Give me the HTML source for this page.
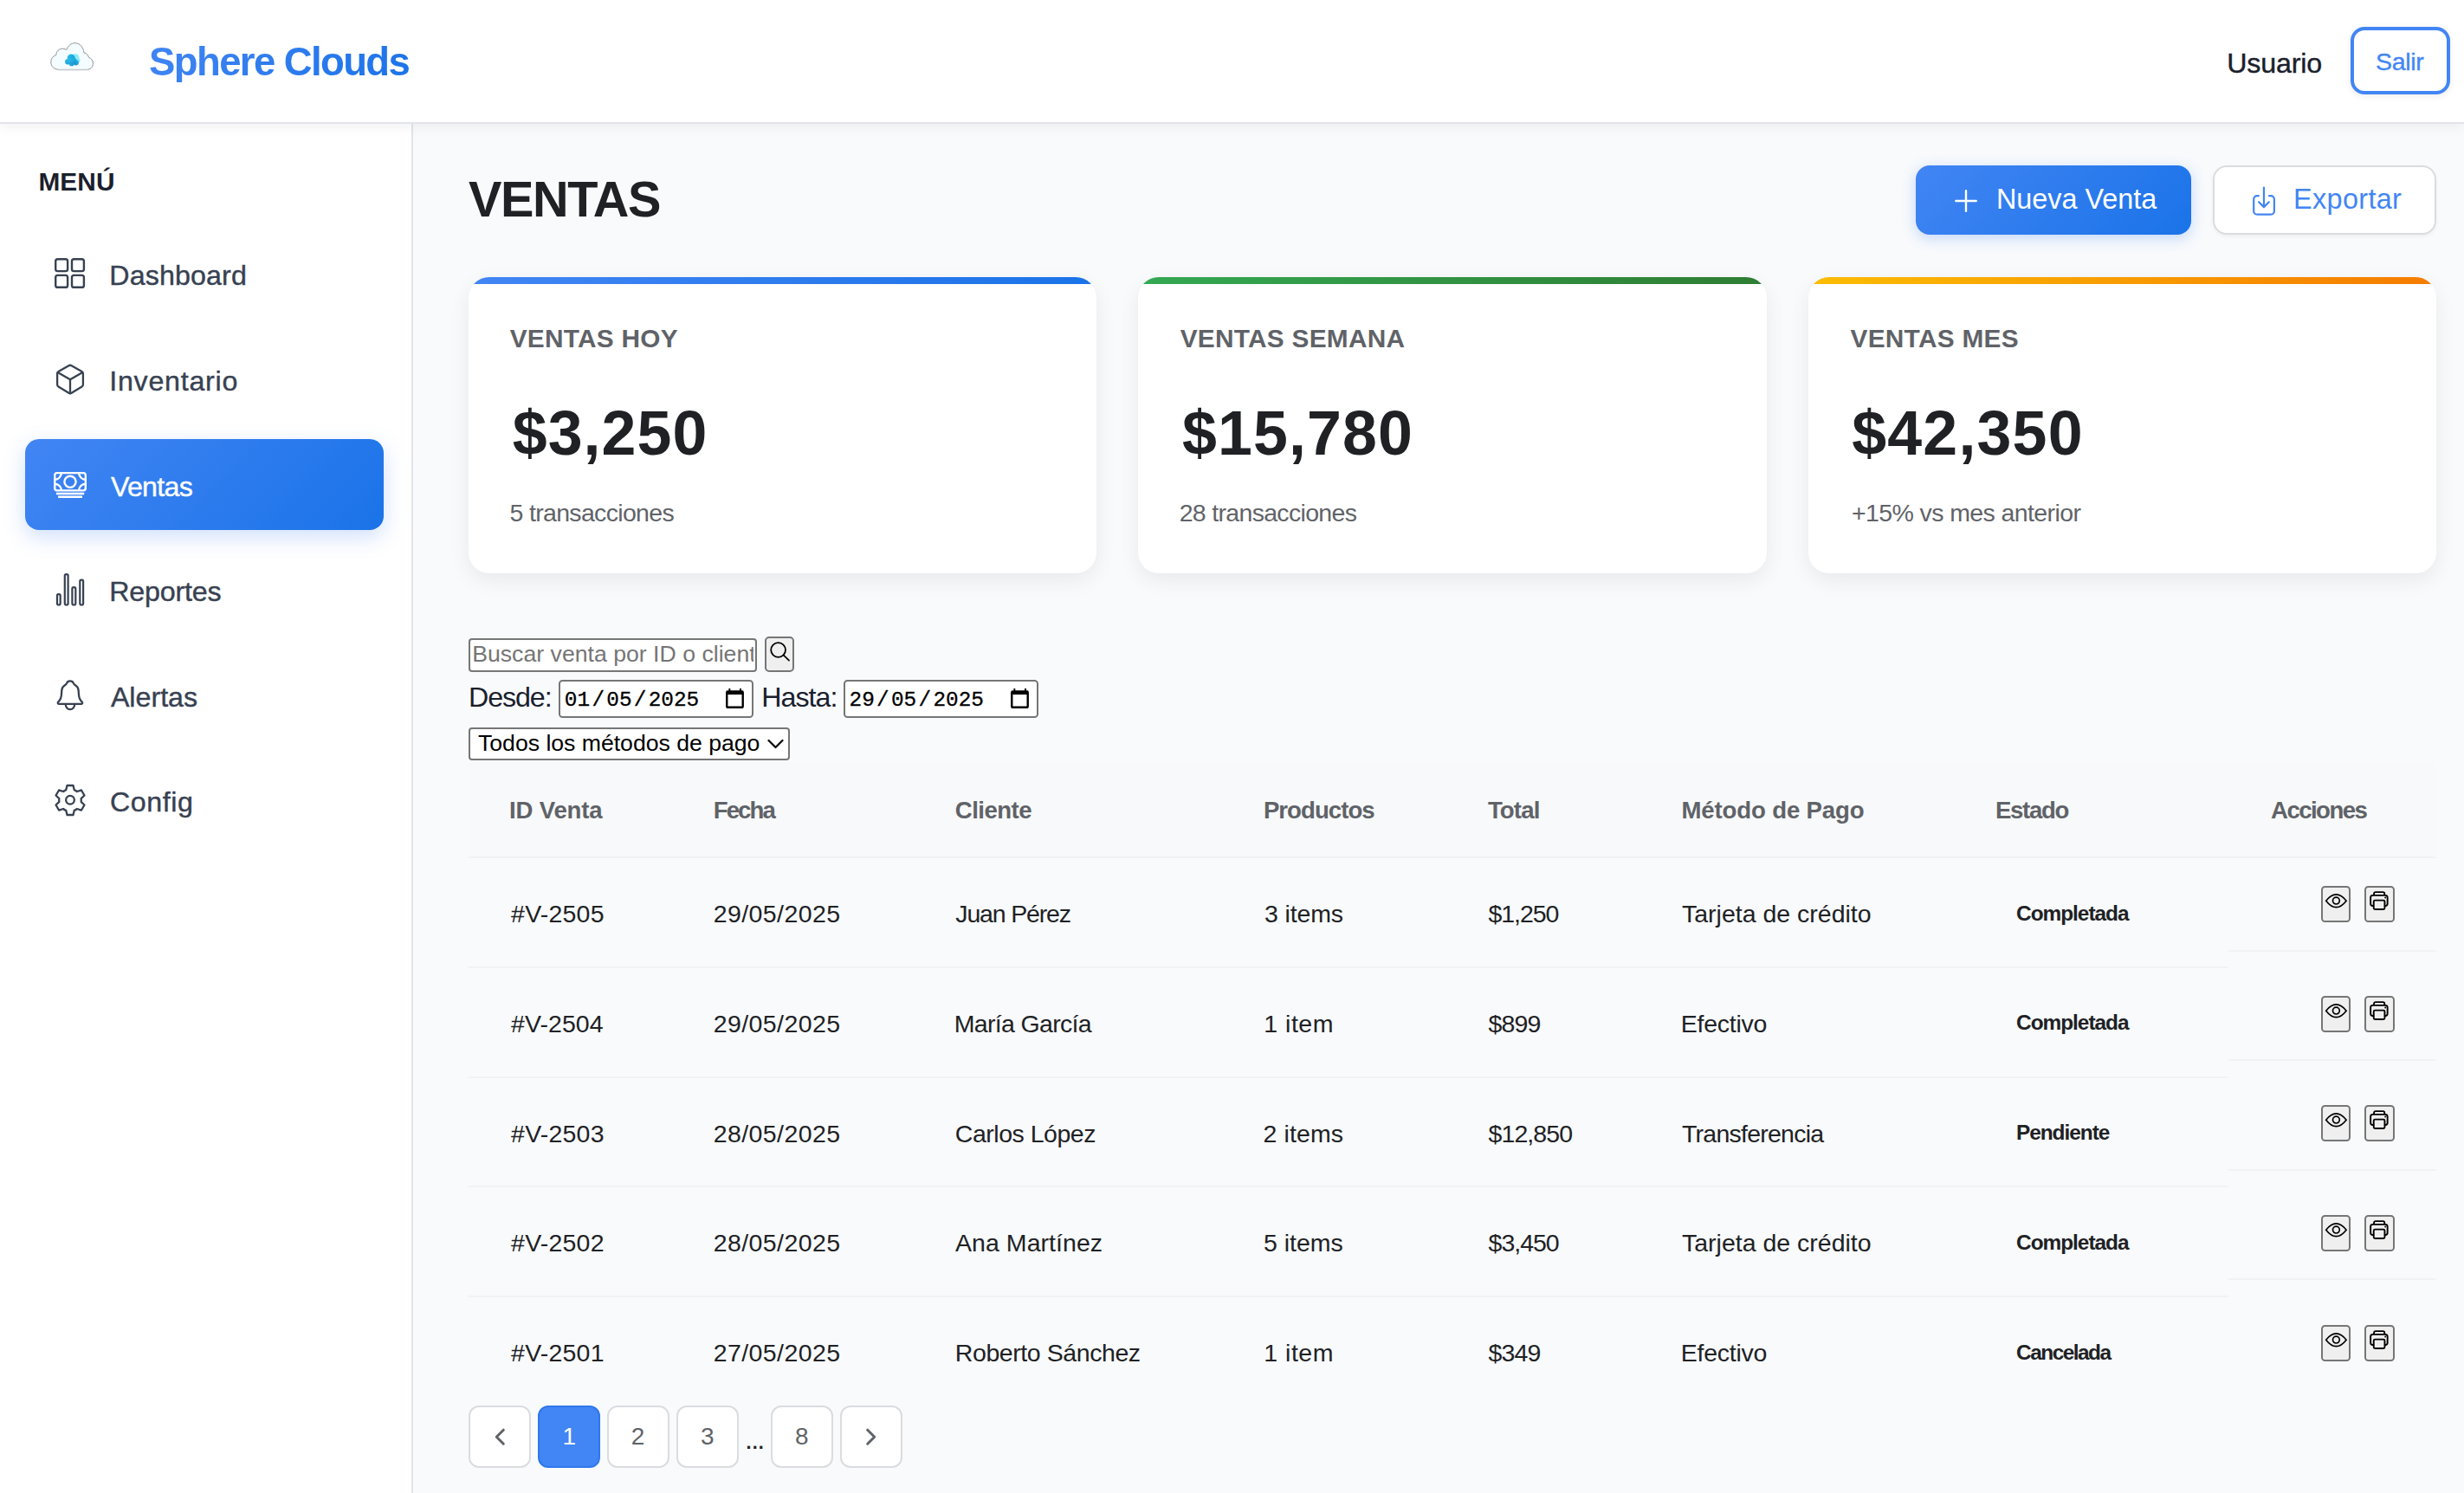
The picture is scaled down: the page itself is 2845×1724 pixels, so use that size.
<!DOCTYPE html>
<html lang="es"><head><meta charset="utf-8"><title>Sphere Clouds - Ventas</title>
<style>
html,body{margin:0;padding:0;}
body{width:2845px;height:1724px;overflow:hidden;background:#f8fafc;font-family:"Liberation Sans",sans-serif;position:relative;}
.t{position:absolute;white-space:nowrap;line-height:1;}
.grad{background:linear-gradient(135deg,#4285f4,#1a73e8);-webkit-background-clip:text;background-clip:text;color:transparent !important;}
</style></head><body>

<div style="position:absolute;left:0px;top:141px;width:475px;height:1583px;background:#fff;border-right:2px solid #e2e4e9;"></div>
<div style="position:absolute;left:0px;top:0px;width:2845px;height:141px;background:#fff;border-bottom:2px solid #e2e4e9;box-shadow:0 4px 14px rgba(0,0,0,.055);"></div>
<svg style="position:absolute;left:57.45px;top:47.55px;" width="52.2" height="34.8" viewBox="0 0 54 36" fill="none" >
<defs><linearGradient id="cg" x1="0" y1="0" x2="1" y2="1"><stop offset="0" stop-color="#2bc4ea"/><stop offset="1" stop-color="#1a8fd1"/></linearGradient></defs>
<path d="M12 33.5 C5 33.5 1.8 29 1.8 24.5 C1.8 20 4.5 17.2 8 16.2 C8.2 11.5 11.5 8.5 16 8.5 C17.8 8.5 19.3 9 20.6 9.8 C22.3 5 26 1.8 30.5 1.8 C36.5 1.8 40.5 6.5 41.3 13.3 C44.5 14 46.3 16 47 18.8 C50.2 20 52.2 22.8 52.2 26 C52.2 30.5 49 33.5 44.5 33.5 Z" fill="#f5fcff" stroke="#8a8f94" stroke-width="1"/>
<path d="M10 34 H46" stroke="#d5d9dc" stroke-width="1.4"/>
<circle cx="31" cy="19" r="4.2" fill="#86ecfb"/><circle cx="33.5" cy="22.5" r="3.2" fill="#86ecfb"/>
<circle cx="26" cy="19.5" r="4.6" fill="url(#cg)"/><circle cx="22" cy="24" r="3.3" fill="url(#cg)"/><circle cx="26.5" cy="26" r="3.2" fill="url(#cg)"/><circle cx="31.5" cy="25" r="3.4" fill="url(#cg)"/><rect x="22" y="20" width="10" height="7" fill="url(#cg)"/>
</svg>
<div id="title" class="t grad" style="left:172.00px;top:49.48px;font-size:45.5px;font-weight:700;color:#2b7de9;letter-spacing:-1.601px;">Sphere Clouds</div>
<div id="usuario" class="t" style="left:2571.20px;top:56.54px;font-size:32.2px;color:#1a202c;letter-spacing:-0.150px;-webkit-text-stroke:0.4px;">Usuario</div>
<div style="position:absolute;left:2714px;top:31px;width:115px;height:78px;box-sizing:border-box;border:4px solid #4285f4;border-radius:16px;background:#fff;box-shadow:0 2px 8px rgba(0,0,0,.08);"></div>
<div id="salir" class="t" style="left:2743.10px;top:57.27px;font-size:28.5px;color:#4285f4;letter-spacing:-0.360px;-webkit-text-stroke:0.35px;">Salir</div>
<div id="menu" class="t" style="left:44.40px;top:195.17px;font-size:29.8px;font-weight:700;color:#1a202c;letter-spacing:0.120px;">MENÚ</div>
<svg style="position:absolute;left:63.45px;top:298.4px;" width="36" height="36" viewBox="0 0 36 36" fill="none" ><g stroke="#374151" stroke-width="2.4" fill="none"><rect x="1.2" y="1.2" width="13.9" height="13.9" rx="2.4"/><rect x="20" y="1.2" width="13.9" height="13.9" rx="2.4"/><rect x="1.2" y="19.9" width="13.9" height="13.9" rx="2.4"/><rect x="20" y="19.9" width="13.9" height="13.9" rx="2.4"/></g></svg>
<div id="nav0" class="t" style="left:126.30px;top:302.34px;font-size:32.2px;color:#374151;letter-spacing:0.134px;-webkit-text-stroke:0.4px;">Dashboard</div>
<svg style="position:absolute;left:62.900000000000006px;top:418.9px;" width="36" height="38" viewBox="-18 -19 36 38" fill="none" ><g stroke="#374151" stroke-width="2.3" fill="none" stroke-linejoin="round" stroke-linecap="round"><path d="M-1.6 -15.8 Q0 -16.7 1.6 -15.8 L13.5 -9 Q14.9 -8.2 14.9 -6.5 V6.1 Q14.9 7.8 13.5 8.6 L1.6 15.8 Q0 16.7 -1.6 15.8 L-13.5 8.6 Q-14.9 7.8 -14.9 6.1 V-6.5 Q-14.9 -8.2 -13.5 -9 Z"/><path d="M-14.3 -7.9 L0 0.2 L14.3 -7.9 M0 0.2 V16.2"/></g></svg>
<div id="nav1" class="t" style="left:126.30px;top:423.94px;font-size:32.2px;color:#374151;letter-spacing:0.740px;-webkit-text-stroke:0.4px;">Inventario</div>
<div style="position:absolute;left:29px;top:506.9px;width:414px;height:105px;border-radius:16px;background:linear-gradient(135deg,#4285f4,#1a73e8);box-shadow:0 8px 24px rgba(66,133,244,.25);"></div>
<svg style="position:absolute;left:61.0px;top:543px;" width="40" height="34" viewBox="0 0 40 34" fill="none" ><g stroke="#fff" stroke-width="2.4" fill="none"><rect x="2.25" y="3.1" width="35.55" height="20.3" rx="2.6"/><circle cx="20" cy="13.3" r="6.6"/><path d="M9.9 3.1 A7.6 7.6 0 0 1 2.25 10.7 M30.1 3.1 A7.6 7.6 0 0 0 37.8 10.7 M2.25 15.8 A7.6 7.6 0 0 1 9.9 23.4 M37.8 15.8 A7.6 7.6 0 0 0 30.1 23.4"/><path d="M3.9 27 H36.2 M6.1 30.8 H34"/></g></svg>
<div id="nav2" class="t" style="left:127.90px;top:545.54px;font-size:32.2px;color:#fff;letter-spacing:-0.684px;-webkit-text-stroke:0.4px;">Ventas</div>
<svg style="position:absolute;left:63.0px;top:660px;" width="36" height="42" viewBox="0 0 36 42" fill="none" ><g stroke="#374151" stroke-width="2.2" fill="none"><rect x="2.97" y="26.05" width="3.7" height="12.45" rx="1.7"/><rect x="11.8" y="3.15" width="3.8" height="35.35" rx="1.7"/><rect x="20.4" y="18.2" width="3.9" height="20.3" rx="1.7"/><rect x="29.3" y="9.6" width="3.8" height="28.9" rx="1.7"/></g></svg>
<div id="nav3" class="t" style="left:126.30px;top:667.14px;font-size:32.2px;color:#374151;letter-spacing:-0.176px;-webkit-text-stroke:0.4px;">Reportes</div>
<svg style="position:absolute;left:63.0px;top:783px;" width="36" height="40" viewBox="0 0 36 40" fill="none" ><g stroke="#374151" stroke-width="2.3" fill="none" stroke-linejoin="round" stroke-linecap="round"><path d="M17.94 3.45 C15.9 3.45 14.6 4.5 14.1 5.9 C13.5 7.3 12.6 7.9 11.6 8.5 C9.6 9.7 8.6 11.6 8.3 14 L7.8 20.5 C7.6 23 6.6 24.6 5.4 26.2 L4.2 27.6 C3.2 28.8 3.9 29.97 5.3 29.97 H30.6 C32 29.97 32.7 28.8 31.7 27.6 L30.5 26.2 C29.3 24.6 28.3 23 28.1 20.5 L27.6 14 C27.3 11.6 26.3 9.7 24.3 8.5 C23.3 7.9 22.4 7.3 21.8 5.9 C21.3 4.5 20 3.45 17.94 3.45 Z"/><path d="M12.7 30.2 C12.9 33.6 15 36.1 17.94 36.1 C20.9 36.1 23 33.6 23.2 30.2"/></g></svg>
<div id="nav4" class="t" style="left:127.90px;top:788.74px;font-size:32.2px;color:#374151;-webkit-text-stroke:0.4px;">Alertas</div>
<svg style="position:absolute;left:61.900000000000006px;top:904.8px;" width="38" height="38" viewBox="-19 -19 38 38" fill="none" ><g stroke="#374151" stroke-width="2.3" fill="none" stroke-linejoin="round"><path d="M-4.70 -11.90 L-3.50 -17.00 L3.50 -17.00 L4.70 -11.90 A12.8 12.8 0 0 1 7.96 -10.02 L12.97 -11.53 L16.47 -5.47 L12.66 -1.88 A12.8 12.8 0 0 1 12.66 1.88 L16.47 5.47 L12.97 11.53 L7.96 10.02 A12.8 12.8 0 0 1 4.70 11.90 L3.50 17.00 L-3.50 17.00 L-4.70 11.90 A12.8 12.8 0 0 1 -7.96 10.02 L-12.97 11.53 L-16.47 5.47 L-12.66 1.88 A12.8 12.8 0 0 1 -12.66 -1.88 L-16.47 -5.47 L-12.97 -11.53 L-7.96 -10.02 A12.8 12.8 0 0 1 -4.70 -11.90 Z"/><circle cx="0" cy="-0.2" r="4.85"/></g></svg>
<div id="nav5" class="t" style="left:126.90px;top:910.34px;font-size:32.2px;color:#374151;letter-spacing:0.576px;-webkit-text-stroke:0.4px;">Config</div>
<div id="h1" class="t" style="left:541.00px;top:201.64px;font-size:57.6px;font-weight:700;color:#202124;letter-spacing:-1.404px;">VENTAS</div>
<div style="position:absolute;left:2212px;top:191.3px;width:318px;height:80.2px;border-radius:16px;background:linear-gradient(135deg,#4285f4,#1a73e8);box-shadow:0 4px 16px rgba(66,133,244,.3);"></div>
<svg style="position:absolute;left:2257px;top:219.2px;" width="26" height="26" viewBox="0 0 26 26" fill="none" ><path d="M13 1.3 V24.7 M1.3 13 H24.7" stroke="#fff" stroke-width="2.4" stroke-linecap="round"/></svg>
<div id="nv" class="t" style="left:2305.00px;top:214.37px;font-size:32.4px;color:#fff;letter-spacing:-0.018px;">Nueva Venta</div>
<div style="position:absolute;left:2554.7px;top:191.3px;width:258.1px;height:79.8px;box-sizing:border-box;border-radius:16px;background:#fff;border:2px solid #dadce0;box-shadow:0 2px 4px rgba(0,0,0,.05);"></div>
<svg style="position:absolute;left:2599px;top:214px;" width="30" height="36" viewBox="0 0 30 36" fill="none" ><g stroke="#4285f4" stroke-width="2.2" fill="none" stroke-linecap="round" stroke-linejoin="round"><path d="M14.95 2.6 V24.6 M9.1 19.3 L14.95 25.1 L20.8 19.3"/><path d="M8.8 12.2 H7.2 C4.9 12.2 3.2 13.9 3.2 16.2 V29.7 C3.2 32 4.9 33.7 7.2 33.7 H22.9 C25.2 33.7 26.9 32 26.9 29.7 V16.2 C26.9 13.9 25.2 12.2 22.9 12.2 H21.1"/></g></svg>
<div id="exp" class="t" style="left:2648.10px;top:214.37px;font-size:32.4px;color:#4285f4;letter-spacing:0.341px;">Exportar</div>
<div style="position:absolute;left:541px;top:319.5px;width:725.33px;height:342.5px;border-radius:24px;background:#fff;box-shadow:0 8px 24px rgba(0,0,0,.07);overflow:hidden;"><div style="height:8.3px;background:linear-gradient(90deg,#4285f4,#1a73e8)"></div></div>
<div id="cl0" class="t" style="left:588.70px;top:375.77px;font-size:29.8px;font-weight:700;color:#5f6368;letter-spacing:0.280px;">VENTAS HOY</div>
<div id="cv0" class="t" style="left:591.70px;top:464.61px;font-size:71.7px;font-weight:700;color:#202124;letter-spacing:1.080px;">$3,250</div>
<div id="cs0" class="t" style="left:588.50px;top:577.67px;font-size:28.5px;color:#5f6368;letter-spacing:-0.672px;">5 transacciones</div>
<div style="position:absolute;left:1314.33px;top:319.5px;width:725.33px;height:342.5px;border-radius:24px;background:#fff;box-shadow:0 8px 24px rgba(0,0,0,.07);overflow:hidden;"><div style="height:8.3px;background:linear-gradient(90deg,#34a853,#2e7d32)"></div></div>
<div id="cl1" class="t" style="left:1362.70px;top:375.77px;font-size:29.8px;font-weight:700;color:#5f6368;letter-spacing:0.270px;">VENTAS SEMANA</div>
<div id="cv1" class="t" style="left:1365.00px;top:464.61px;font-size:71.7px;font-weight:700;color:#202124;letter-spacing:1.140px;">$15,780</div>
<div id="cs1" class="t" style="left:1361.70px;top:577.67px;font-size:28.5px;color:#5f6368;letter-spacing:-0.684px;">28 transacciones</div>
<div style="position:absolute;left:2087.67px;top:319.5px;width:725.33px;height:342.5px;border-radius:24px;background:#fff;box-shadow:0 8px 24px rgba(0,0,0,.07);overflow:hidden;"><div style="height:8.3px;background:linear-gradient(90deg,#fbbc04,#f57c00)"></div></div>
<div id="cl2" class="t" style="left:2136.50px;top:375.77px;font-size:29.8px;font-weight:700;color:#5f6368;letter-spacing:0.280px;">VENTAS MES</div>
<div id="cv2" class="t" style="left:2138.20px;top:464.61px;font-size:71.7px;font-weight:700;color:#202124;letter-spacing:1.200px;">$42,350</div>
<div id="cs2" class="t" style="left:2138.00px;top:577.67px;font-size:28.5px;color:#5f6368;letter-spacing:-0.603px;">+15% vs mes anterior</div>
<div style="position:absolute;left:541px;top:737.1px;width:333px;height:38.6px;box-sizing:border-box;border:2px solid #767676;border-radius:4px;background:#fff;"></div>
<div style="position:absolute;left:543px;top:738.7px;width:327.2px;height:35px;overflow:hidden;"><div class="t" style="left:2.2px;top:2.92px;font-size:26.67px;color:#757575;">Buscar venta por ID o cliente...</div></div>
<div style="position:absolute;left:883.2px;top:735.2px;width:33.5px;height:40.5px;box-sizing:border-box;border:2px solid #767676;border-radius:5px;background:#efefef;"></div>
<svg style="position:absolute;left:888px;top:740px;" width="26" height="26" viewBox="0 0 26 26" fill="none" ><g stroke="#000" stroke-width="1.8" fill="none" stroke-linecap="round"><circle cx="10.6" cy="10.5" r="8.4"/><path d="M16.6 16.4 L23 22.6"/></g></svg>
<div id="desde" class="t" style="left:541.00px;top:788.54px;font-size:32.2px;color:#1a202c;letter-spacing:-1.080px;">Desde:</div>
<div id="hasta" class="t" style="left:879.30px;top:788.54px;font-size:32.2px;color:#1a202c;letter-spacing:-0.990px;">Hasta:</div>
<div style="position:absolute;left:645.3px;top:785px;width:224.6px;height:43.5px;box-sizing:border-box;border:2px solid #767676;border-radius:4.5px;background:#fff;"></div>
<div class="t" style="left:649.6px;top:797.15px;font-size:24.4px;font-family:'Liberation Mono', monospace;color:#000;-webkit-text-stroke:0.3px;"><span style="padding:0 2.25px">01</span>/<span style="padding:0 2.25px">05</span>/<span style="padding:0 2.25px">2025</span></div>
<svg style="position:absolute;left:838.05px;top:795px;" width="21" height="23" viewBox="0 0 21 23" fill="none" ><rect x="1.25" y="3.8" width="18.45" height="18" rx="1.4" fill="none" stroke="#000" stroke-width="2.4"/><path d="M0.6 2.6 H20.35 V7 H0.6 Z M3.4 0 H5.3 V3 H3.4 Z M16 0 H17.9 V3 H16 Z" fill="#000"/></svg>
<div style="position:absolute;left:974px;top:785px;width:224.6px;height:43.5px;box-sizing:border-box;border:2px solid #767676;border-radius:4.5px;background:#fff;"></div>
<div class="t" style="left:978.3px;top:797.15px;font-size:24.4px;font-family:'Liberation Mono', monospace;color:#000;-webkit-text-stroke:0.3px;"><span style="padding:0 2.25px">29</span>/<span style="padding:0 2.25px">05</span>/<span style="padding:0 2.25px">2025</span></div>
<svg style="position:absolute;left:1166.75px;top:795px;" width="21" height="23" viewBox="0 0 21 23" fill="none" ><rect x="1.25" y="3.8" width="18.45" height="18" rx="1.4" fill="none" stroke="#000" stroke-width="2.4"/><path d="M0.6 2.6 H20.35 V7 H0.6 Z M3.4 0 H5.3 V3 H3.4 Z M16 0 H17.9 V3 H16 Z" fill="#000"/></svg>
<div style="position:absolute;left:541px;top:840px;width:370.5px;height:38px;box-sizing:border-box;border:2px solid #767676;border-radius:4px;background:#fff;"></div>
<div id="sel" class="t" style="left:552.00px;top:845.42px;font-size:26.67px;color:#000;letter-spacing:-0.026px;">Todos los métodos de pago</div>
<svg style="position:absolute;left:885.7px;top:853px;" width="19" height="12" viewBox="0 0 19 12" fill="none" ><path d="M1.5 2 L9.5 10 L17.5 2" stroke="#000" stroke-width="2.2" fill="none" stroke-linecap="round" stroke-linejoin="round"/></svg>
<div style="position:absolute;left:541px;top:880px;width:2272px;height:109px;background:#f8f9fa;"></div>
<div style="position:absolute;left:541px;top:989px;width:2272px;height:2px;background:#f0f2f4;"></div>
<div id="th0" class="t" style="left:588.10px;top:922.44px;font-size:27.6px;font-weight:700;color:#5f6368;letter-spacing:-0.207px;">ID Venta</div>
<div id="th1" class="t" style="left:823.70px;top:922.44px;font-size:27.6px;font-weight:700;color:#5f6368;letter-spacing:-1.890px;">Fecha</div>
<div id="th2" class="t" style="left:1102.80px;top:922.44px;font-size:27.6px;font-weight:700;color:#5f6368;letter-spacing:-0.540px;">Cliente</div>
<div id="th3" class="t" style="left:1458.90px;top:922.44px;font-size:27.6px;font-weight:700;color:#5f6368;letter-spacing:-0.961px;">Productos</div>
<div id="th4" class="t" style="left:1717.90px;top:922.44px;font-size:27.6px;font-weight:700;color:#5f6368;letter-spacing:-0.855px;">Total</div>
<div id="th5" class="t" style="left:1941.50px;top:922.44px;font-size:27.6px;font-weight:700;color:#5f6368;letter-spacing:-0.153px;">Método de Pago</div>
<div id="th6" class="t" style="left:2304.00px;top:922.44px;font-size:27.6px;font-weight:700;color:#5f6368;letter-spacing:-1.332px;">Estado</div>
<div id="th7" class="t" style="left:2622.00px;top:922.44px;font-size:27.6px;font-weight:700;color:#5f6368;letter-spacing:-1.544px;">Acciones</div>
<div id="r0c0" class="t" style="left:590.10px;top:1041.47px;font-size:28.5px;color:#202124;letter-spacing:0.210px;">#V-2505</div>
<div id="r0c1" class="t" style="left:823.70px;top:1041.47px;font-size:28.5px;color:#202124;letter-spacing:0.420px;">29/05/2025</div>
<div id="r0c2" class="t" style="left:1103.30px;top:1041.47px;font-size:28.5px;color:#202124;letter-spacing:-1.160px;">Juan Pérez</div>
<div id="r0c3" class="t" style="left:1459.90px;top:1041.47px;font-size:28.5px;color:#202124;letter-spacing:-0.120px;">3 items</div>
<div id="r0c4" class="t" style="left:1718.50px;top:1041.47px;font-size:28.5px;color:#202124;letter-spacing:-1.080px;">$1,250</div>
<div id="r0c5" class="t" style="left:1942.00px;top:1041.47px;font-size:28.5px;color:#202124;">Tarjeta de crédito</div>
<div id="r0b" class="t" style="left:2328.10px;top:1042.95px;font-size:24.4px;font-weight:700;color:#202124;letter-spacing:-1.020px;">Completada</div>
<div style="position:absolute;left:541px;top:1116px;width:2032px;height:2px;background:#f0f2f4;"></div>
<div style="position:absolute;left:2573px;top:1097px;width:240px;height:2px;background:#f0f2f4;"></div>
<div style="position:absolute;left:2680px;top:1023px;width:34px;height:42px;box-sizing:border-box;border:2px solid #767676;border-radius:4.5px;background:#efefef;"></div>
<svg style="position:absolute;left:2680px;top:1023px;" width="34" height="42" viewBox="0 0 34 42" fill="none" ><g stroke="#000" stroke-width="1.7" fill="none" stroke-linejoin="miter"><path d="M5.7 17.3 C9.5 12.4 13.2 9.95 17.4 9.95 C21.6 9.95 25.3 12.4 29.1 17.3 C25.3 22.2 21.6 24.7 17.4 24.7 C13.2 24.7 9.5 22.2 5.7 17.3 Z"/><circle cx="17.4" cy="17.1" r="3.9"/></g></svg>
<div style="position:absolute;left:2730.2px;top:1023px;width:34.6px;height:42px;box-sizing:border-box;border:2px solid #767676;border-radius:4.5px;background:#efefef;"></div>
<svg style="position:absolute;left:2730.3px;top:1023px;" width="34.6" height="42" viewBox="0 0 34.6 42" fill="none" ><g stroke="#000" stroke-width="1.9" fill="none" stroke-linejoin="round"><path d="M11.05 10.85 V9 C11.05 7.9 11.8 7.15 12.9 7.15 H21.4 C22.5 7.15 23.25 7.9 23.25 9 V10.85"/><path d="M10.75 23.05 H9.65 C8.1 23.05 7.15 22.1 7.15 20.55 V13.35 C7.15 11.8 8.1 10.85 9.65 10.85 H24.15 C25.7 10.85 26.65 11.8 26.65 13.35 V20.55 C26.65 22.1 25.7 23.05 24.15 23.05 H23.45"/><rect x="10.75" y="16.65" width="12.7" height="10.3" rx="1.5"/></g><circle cx="24.2" cy="13.5" r="1" fill="#000"/></svg>
<div id="r1c0" class="t" style="left:590.10px;top:1167.97px;font-size:28.5px;color:#202124;letter-spacing:0.060px;">#V-2504</div>
<div id="r1c1" class="t" style="left:823.70px;top:1167.97px;font-size:28.5px;color:#202124;letter-spacing:0.420px;">29/05/2025</div>
<div id="r1c2" class="t" style="left:1101.80px;top:1167.97px;font-size:28.5px;color:#202124;letter-spacing:-0.682px;">María García</div>
<div id="r1c3" class="t" style="left:1459.30px;top:1167.97px;font-size:28.5px;color:#202124;letter-spacing:0.504px;">1 item</div>
<div id="r1c4" class="t" style="left:1718.60px;top:1167.97px;font-size:28.5px;color:#202124;letter-spacing:-0.840px;">$899</div>
<div id="r1c5" class="t" style="left:1940.70px;top:1167.97px;font-size:28.5px;color:#202124;letter-spacing:-0.230px;">Efectivo</div>
<div id="r1b" class="t" style="left:2328.10px;top:1169.45px;font-size:24.4px;font-weight:700;color:#202124;letter-spacing:-1.020px;">Completada</div>
<div style="position:absolute;left:541px;top:1243px;width:2032px;height:2px;background:#f0f2f4;"></div>
<div style="position:absolute;left:2573px;top:1223px;width:240px;height:2px;background:#f0f2f4;"></div>
<div style="position:absolute;left:2680px;top:1150px;width:34px;height:42px;box-sizing:border-box;border:2px solid #767676;border-radius:4.5px;background:#efefef;"></div>
<svg style="position:absolute;left:2680px;top:1150px;" width="34" height="42" viewBox="0 0 34 42" fill="none" ><g stroke="#000" stroke-width="1.7" fill="none" stroke-linejoin="miter"><path d="M5.7 17.3 C9.5 12.4 13.2 9.95 17.4 9.95 C21.6 9.95 25.3 12.4 29.1 17.3 C25.3 22.2 21.6 24.7 17.4 24.7 C13.2 24.7 9.5 22.2 5.7 17.3 Z"/><circle cx="17.4" cy="17.1" r="3.9"/></g></svg>
<div style="position:absolute;left:2730.2px;top:1150px;width:34.6px;height:42px;box-sizing:border-box;border:2px solid #767676;border-radius:4.5px;background:#efefef;"></div>
<svg style="position:absolute;left:2730.3px;top:1150px;" width="34.6" height="42" viewBox="0 0 34.6 42" fill="none" ><g stroke="#000" stroke-width="1.9" fill="none" stroke-linejoin="round"><path d="M11.05 10.85 V9 C11.05 7.9 11.8 7.15 12.9 7.15 H21.4 C22.5 7.15 23.25 7.9 23.25 9 V10.85"/><path d="M10.75 23.05 H9.65 C8.1 23.05 7.15 22.1 7.15 20.55 V13.35 C7.15 11.8 8.1 10.85 9.65 10.85 H24.15 C25.7 10.85 26.65 11.8 26.65 13.35 V20.55 C26.65 22.1 25.7 23.05 24.15 23.05 H23.45"/><rect x="10.75" y="16.65" width="12.7" height="10.3" rx="1.5"/></g><circle cx="24.2" cy="13.5" r="1" fill="#000"/></svg>
<div id="r2c0" class="t" style="left:590.10px;top:1294.67px;font-size:28.5px;color:#202124;letter-spacing:0.210px;">#V-2503</div>
<div id="r2c1" class="t" style="left:823.70px;top:1294.67px;font-size:28.5px;color:#202124;letter-spacing:0.420px;">28/05/2025</div>
<div id="r2c2" class="t" style="left:1102.80px;top:1294.67px;font-size:28.5px;color:#202124;letter-spacing:-0.478px;">Carlos López</div>
<div id="r2c3" class="t" style="left:1458.50px;top:1294.67px;font-size:28.5px;color:#202124;letter-spacing:0.120px;">2 items</div>
<div id="r2c4" class="t" style="left:1718.60px;top:1294.67px;font-size:28.5px;color:#202124;letter-spacing:-0.930px;">$12,850</div>
<div id="r2c5" class="t" style="left:1942.00px;top:1294.67px;font-size:28.5px;color:#202124;letter-spacing:-0.754px;">Transferencia</div>
<div id="r2b" class="t" style="left:2327.90px;top:1296.15px;font-size:24.4px;font-weight:700;color:#202124;letter-spacing:-1.012px;">Pendiente</div>
<div style="position:absolute;left:541px;top:1369px;width:2032px;height:2px;background:#f0f2f4;"></div>
<div style="position:absolute;left:2573px;top:1350px;width:240px;height:2px;background:#f0f2f4;"></div>
<div style="position:absolute;left:2680px;top:1276px;width:34px;height:42px;box-sizing:border-box;border:2px solid #767676;border-radius:4.5px;background:#efefef;"></div>
<svg style="position:absolute;left:2680px;top:1276px;" width="34" height="42" viewBox="0 0 34 42" fill="none" ><g stroke="#000" stroke-width="1.7" fill="none" stroke-linejoin="miter"><path d="M5.7 17.3 C9.5 12.4 13.2 9.95 17.4 9.95 C21.6 9.95 25.3 12.4 29.1 17.3 C25.3 22.2 21.6 24.7 17.4 24.7 C13.2 24.7 9.5 22.2 5.7 17.3 Z"/><circle cx="17.4" cy="17.1" r="3.9"/></g></svg>
<div style="position:absolute;left:2730.2px;top:1276px;width:34.6px;height:42px;box-sizing:border-box;border:2px solid #767676;border-radius:4.5px;background:#efefef;"></div>
<svg style="position:absolute;left:2730.3px;top:1276px;" width="34.6" height="42" viewBox="0 0 34.6 42" fill="none" ><g stroke="#000" stroke-width="1.9" fill="none" stroke-linejoin="round"><path d="M11.05 10.85 V9 C11.05 7.9 11.8 7.15 12.9 7.15 H21.4 C22.5 7.15 23.25 7.9 23.25 9 V10.85"/><path d="M10.75 23.05 H9.65 C8.1 23.05 7.15 22.1 7.15 20.55 V13.35 C7.15 11.8 8.1 10.85 9.65 10.85 H24.15 C25.7 10.85 26.65 11.8 26.65 13.35 V20.55 C26.65 22.1 25.7 23.05 24.15 23.05 H23.45"/><rect x="10.75" y="16.65" width="12.7" height="10.3" rx="1.5"/></g><circle cx="24.2" cy="13.5" r="1" fill="#000"/></svg>
<div id="r3c0" class="t" style="left:590.10px;top:1421.27px;font-size:28.5px;color:#202124;letter-spacing:0.210px;">#V-2502</div>
<div id="r3c1" class="t" style="left:823.70px;top:1421.27px;font-size:28.5px;color:#202124;letter-spacing:0.420px;">28/05/2025</div>
<div id="r3c2" class="t" style="left:1103.00px;top:1421.27px;font-size:28.5px;color:#202124;letter-spacing:0.052px;">Ana Martínez</div>
<div id="r3c3" class="t" style="left:1459.00px;top:1421.27px;font-size:28.5px;color:#202124;letter-spacing:-0.030px;">5 items</div>
<div id="r3c4" class="t" style="left:1718.60px;top:1421.27px;font-size:28.5px;color:#202124;letter-spacing:-1.008px;">$3,450</div>
<div id="r3c5" class="t" style="left:1942.00px;top:1421.27px;font-size:28.5px;color:#202124;">Tarjeta de crédito</div>
<div id="r3b" class="t" style="left:2328.10px;top:1422.75px;font-size:24.4px;font-weight:700;color:#202124;letter-spacing:-1.020px;">Completada</div>
<div style="position:absolute;left:541px;top:1496px;width:2032px;height:2px;background:#f0f2f4;"></div>
<div style="position:absolute;left:2573px;top:1476px;width:240px;height:2px;background:#f0f2f4;"></div>
<div style="position:absolute;left:2680px;top:1403px;width:34px;height:42px;box-sizing:border-box;border:2px solid #767676;border-radius:4.5px;background:#efefef;"></div>
<svg style="position:absolute;left:2680px;top:1403px;" width="34" height="42" viewBox="0 0 34 42" fill="none" ><g stroke="#000" stroke-width="1.7" fill="none" stroke-linejoin="miter"><path d="M5.7 17.3 C9.5 12.4 13.2 9.95 17.4 9.95 C21.6 9.95 25.3 12.4 29.1 17.3 C25.3 22.2 21.6 24.7 17.4 24.7 C13.2 24.7 9.5 22.2 5.7 17.3 Z"/><circle cx="17.4" cy="17.1" r="3.9"/></g></svg>
<div style="position:absolute;left:2730.2px;top:1403px;width:34.6px;height:42px;box-sizing:border-box;border:2px solid #767676;border-radius:4.5px;background:#efefef;"></div>
<svg style="position:absolute;left:2730.3px;top:1403px;" width="34.6" height="42" viewBox="0 0 34.6 42" fill="none" ><g stroke="#000" stroke-width="1.9" fill="none" stroke-linejoin="round"><path d="M11.05 10.85 V9 C11.05 7.9 11.8 7.15 12.9 7.15 H21.4 C22.5 7.15 23.25 7.9 23.25 9 V10.85"/><path d="M10.75 23.05 H9.65 C8.1 23.05 7.15 22.1 7.15 20.55 V13.35 C7.15 11.8 8.1 10.85 9.65 10.85 H24.15 C25.7 10.85 26.65 11.8 26.65 13.35 V20.55 C26.65 22.1 25.7 23.05 24.15 23.05 H23.45"/><rect x="10.75" y="16.65" width="12.7" height="10.3" rx="1.5"/></g><circle cx="24.2" cy="13.5" r="1" fill="#000"/></svg>
<div id="r4c0" class="t" style="left:590.10px;top:1548.27px;font-size:28.5px;color:#202124;letter-spacing:0.210px;">#V-2501</div>
<div id="r4c1" class="t" style="left:823.70px;top:1548.27px;font-size:28.5px;color:#202124;letter-spacing:0.420px;">27/05/2025</div>
<div id="r4c2" class="t" style="left:1102.80px;top:1548.27px;font-size:28.5px;color:#202124;letter-spacing:-0.424px;">Roberto Sánchez</div>
<div id="r4c3" class="t" style="left:1459.30px;top:1548.27px;font-size:28.5px;color:#202124;letter-spacing:0.504px;">1 item</div>
<div id="r4c4" class="t" style="left:1718.60px;top:1548.27px;font-size:28.5px;color:#202124;letter-spacing:-0.840px;">$349</div>
<div id="r4c5" class="t" style="left:1940.70px;top:1548.27px;font-size:28.5px;color:#202124;letter-spacing:-0.230px;">Efectivo</div>
<div id="r4b" class="t" style="left:2328.10px;top:1549.75px;font-size:24.4px;font-weight:700;color:#202124;letter-spacing:-1.506px;">Cancelada</div>
<div style="position:absolute;left:2680px;top:1530px;width:34px;height:42px;box-sizing:border-box;border:2px solid #767676;border-radius:4.5px;background:#efefef;"></div>
<svg style="position:absolute;left:2680px;top:1530px;" width="34" height="42" viewBox="0 0 34 42" fill="none" ><g stroke="#000" stroke-width="1.7" fill="none" stroke-linejoin="miter"><path d="M5.7 17.3 C9.5 12.4 13.2 9.95 17.4 9.95 C21.6 9.95 25.3 12.4 29.1 17.3 C25.3 22.2 21.6 24.7 17.4 24.7 C13.2 24.7 9.5 22.2 5.7 17.3 Z"/><circle cx="17.4" cy="17.1" r="3.9"/></g></svg>
<div style="position:absolute;left:2730.2px;top:1530px;width:34.6px;height:42px;box-sizing:border-box;border:2px solid #767676;border-radius:4.5px;background:#efefef;"></div>
<svg style="position:absolute;left:2730.3px;top:1530px;" width="34.6" height="42" viewBox="0 0 34.6 42" fill="none" ><g stroke="#000" stroke-width="1.9" fill="none" stroke-linejoin="round"><path d="M11.05 10.85 V9 C11.05 7.9 11.8 7.15 12.9 7.15 H21.4 C22.5 7.15 23.25 7.9 23.25 9 V10.85"/><path d="M10.75 23.05 H9.65 C8.1 23.05 7.15 22.1 7.15 20.55 V13.35 C7.15 11.8 8.1 10.85 9.65 10.85 H24.15 C25.7 10.85 26.65 11.8 26.65 13.35 V20.55 C26.65 22.1 25.7 23.05 24.15 23.05 H23.45"/><rect x="10.75" y="16.65" width="12.7" height="10.3" rx="1.5"/></g><circle cx="24.2" cy="13.5" r="1" fill="#000"/></svg>
<div style="position:absolute;left:541.3px;top:1623px;width:71.6px;height:71.7px;box-sizing:border-box;border-radius:12px;background:#fff;border:2px solid #dadce0;"></div>
<svg style="position:absolute;left:565px;top:1647px;" width="24" height="24" viewBox="0 0 24 24" fill="none" ><path d="M16.3 4.2 L8.3 12.2 L16.3 20.2" stroke="#5f6368" stroke-width="3" fill="none" stroke-linecap="round" stroke-linejoin="round"/></svg>
<div style="position:absolute;left:621px;top:1623px;width:71.6px;height:71.7px;box-sizing:border-box;border-radius:12px;background:#4285f4;border:2px solid #2f78ee;"></div>
<div id="p1" class="t" style="left:649.50px;top:1644.70px;font-size:28px;color:#fff;">1</div>
<div style="position:absolute;left:701.3px;top:1623px;width:71.6px;height:71.7px;box-sizing:border-box;border-radius:12px;background:#fff;border:2px solid #dadce0;"></div>
<div id="p2" class="t" style="left:728.70px;top:1644.70px;font-size:28px;color:#5f6368;">2</div>
<div style="position:absolute;left:781.3px;top:1623px;width:71.6px;height:71.7px;box-sizing:border-box;border-radius:12px;background:#fff;border:2px solid #dadce0;"></div>
<div id="p3" class="t" style="left:809.00px;top:1644.70px;font-size:28px;color:#5f6368;">3</div>
<div id="dots" class="t" style="left:860.10px;top:1645.54px;font-size:32.2px;color:#202124;letter-spacing:-1.890px;">...</div>
<div style="position:absolute;left:890px;top:1623px;width:71.6px;height:71.7px;box-sizing:border-box;border-radius:12px;background:#fff;border:2px solid #dadce0;"></div>
<div id="p8" class="t" style="left:918.10px;top:1644.70px;font-size:28px;color:#5f6368;">8</div>
<div style="position:absolute;left:970.2px;top:1623px;width:71.6px;height:71.7px;box-sizing:border-box;border-radius:12px;background:#fff;border:2px solid #dadce0;"></div>
<svg style="position:absolute;left:994px;top:1647px;" width="24" height="24" viewBox="0 0 24 24" fill="none" ><path d="M7.7 4.2 L15.7 12.2 L7.7 20.2" stroke="#5f6368" stroke-width="3" fill="none" stroke-linecap="round" stroke-linejoin="round"/></svg>
</body></html>
